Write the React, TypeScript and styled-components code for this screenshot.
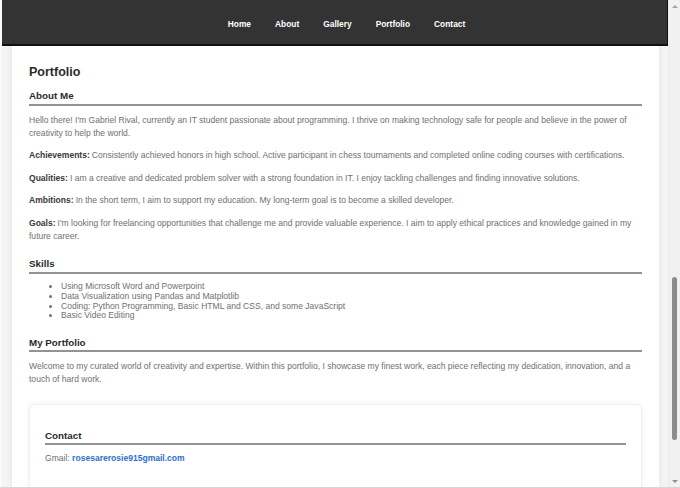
import styled, { createGlobalStyle } from 'styled-components';

interface Skill {
  label: string;
}

interface Detail {
  label: string;
  text: string;
}

const GlobalStyle = createGlobalStyle`
  * {
    box-sizing: border-box;
  }

  html,
  body {
    margin: 0;
    padding: 0;
    background: #ffffff;
    font-family: 'Liberation Sans', Arial, sans-serif;
  }
`;

const Window = styled.div`
  display: flex;
  width: 680px;
  height: 488px;
  overflow: hidden;
  border-bottom: 1px solid #d6d6d6;
`;

const Viewport = styled.div`
  flex: 1;
  display: flex;
  flex-direction: column;
  min-width: 0;
  overflow: hidden;
  background: #f4f4f4;
  border-left: 2px solid #fbfbfb;
`;

const Nav = styled.nav`
  flex: 0 0 46px;
  display: flex;
  align-items: center;
  justify-content: center;
  background: #333333;
  border-right: 1px solid #111111;
  border-bottom: 2px solid #111111;
`;

const NavList = styled.ul`
  display: flex;
  gap: 24px;
  margin: 0;
  padding: 0 0 0 24px;
  list-style: none;
`;

const NavLink = styled.a`
  color: #ffffff;
  font-size: 8.4px;
  font-weight: bold;
  text-decoration: none;
`;

const Page = styled.div`
  flex: 1;
  display: flex;
  justify-content: center;
  padding: 0 9px 0 10px;
  min-height: 0;
`;

const Main = styled.main`
  width: 648px;
  padding: 19px 17px 0;
  background: #ffffff;
  box-shadow: 0 0 6px rgba(0, 0, 0, 0.08);
`;

const PageTitle = styled.h2`
  margin: 0;
  color: #2b2b2b;
  font-size: 12.5px;
  font-weight: bold;
  line-height: 14.4px;
`;

const Section = styled.section<{ $top?: number }>`
  margin-top: ${({ $top }) => $top ?? 15.7}px;
`;

const SectionTitle = styled.h3<{ $tight?: boolean }>`
  margin: 0 0 ${({ $tight }) => ($tight ? 7 : 8)}px;
  padding-bottom: ${({ $tight }) => ($tight ? 1.5 : 2.5)}px;
  border-bottom: 2px solid #939393;
  color: #2b2b2b;
  font-size: 9.8px;
  font-weight: bold;
  line-height: 11.3px;
`;

const Paragraph = styled.p`
  margin: 0 0 9.5px;
  color: #707070;
  font-size: 8.55px;
  line-height: 13px;

  &:last-child {
    margin-bottom: 0;
  }
`;

const Label = styled.strong`
  color: #3a3a3a;
  margin-right: 2px;
`;

const SkillList = styled.ul`
  margin: 0;
  padding-left: 32px;
  color: #707070;
  font-size: 8.55px;
  line-height: 9.7px;
`;

const ContactCard = styled.div`
  margin-top: 17.5px;
  padding: 15px 15px 40px;
  border: 1px solid #f0f0f0;
  border-radius: 5px;
  box-shadow: 0 0 5px rgba(0, 0, 0, 0.06);
  background: #ffffff;
`;

const Mail = styled.a`
  color: #2f6fd0;
  font-weight: bold;
  text-decoration: none;
`;

const Scrollbar = styled.div`
  flex: 0 0 12px;
  display: flex;
  flex-direction: column;
  background: #f1f1f1;
  border-left: 1px solid #e9e9e9;
`;

const Arrow = styled.div<{ $down?: boolean }>`
  flex: 0 0 12px;
  display: flex;
  align-items: center;
  justify-content: center;

  &::before {
    content: '';
    border-left: 3px solid transparent;
    border-right: 3px solid transparent;
    ${({ $down }) =>
      $down ? 'border-top: 3px solid #8f8f8f;' : 'border-bottom: 3px solid #a5a5a5;'}
  }
`;

const Track = styled.div`
  flex: 1;
  display: flex;
  justify-content: center;
`;

const Thumb = styled.div`
  width: 5px;
  height: 163px;
  margin-top: 265px;
  border-radius: 3px;
  background: #8c8c8c;
`;

const links = ['Home', 'About', 'Gallery', 'Portfolio', 'Contact'];

const details: Detail[] = [
  {
    label: 'Achievements:',
    text: 'Consistently achieved honors in high school. Active participant in chess tournaments and completed online coding courses with certifications.',
  },
  {
    label: 'Qualities:',
    text: 'I am a creative and dedicated problem solver with a strong foundation in IT. I enjoy tackling challenges and finding innovative solutions.',
  },
  {
    label: 'Ambitions:',
    text: 'In the short term, I aim to support my education. My long-term goal is to become a skilled developer.',
  },
  {
    label: 'Goals:',
    text: "I'm looking for freelancing opportunities that challenge me and provide valuable experience. I aim to apply ethical practices and knowledge gained in my future career.",
  },
];

const skills: Skill[] = [
  { label: 'Using Microsoft Word and Powerpoint' },
  { label: 'Data Visualization using Pandas and Matplotlib' },
  { label: 'Coding: Python Programming, Basic HTML and CSS, and some JavaScript' },
  { label: 'Basic Video Editing' },
];

const App = () => {
  return (
    <>
      <GlobalStyle />
      <Window>
        <Viewport>
          <Nav>
            <NavList>
              {links.map((link) => (
                <li key={link}>
                  <NavLink href={`#${link.toLowerCase()}`}>{link}</NavLink>
                </li>
              ))}
            </NavList>
          </Nav>
          <Page>
            <Main id="portfolio">
              <PageTitle>Portfolio</PageTitle>

              <Section $top={10.5}>
                <SectionTitle>About Me</SectionTitle>
                <Paragraph>
                  Hello there! I'm Gabriel Rival, currently an IT student passionate about programming. I
                  thrive on making technology safe for people and believe in the power of creativity to
                  help the world.
                </Paragraph>
                {details.map((detail) => (
                  <Paragraph key={detail.label}>
                    <Label>{detail.label}</Label>
                    {detail.text}
                  </Paragraph>
                ))}
              </Section>

              <Section>
                <SectionTitle>Skills</SectionTitle>
                <SkillList>
                  {skills.map((skill) => (
                    <li key={skill.label}>{skill.label}</li>
                  ))}
                </SkillList>
              </Section>

              <Section>
                <SectionTitle>My Portfolio</SectionTitle>
                <Paragraph>
                  Welcome to my curated world of creativity and expertise. Within this portfolio, I
                  showcase my finest work, each piece reflecting my dedication, innovation, and a touch
                  of hard work.
                </Paragraph>
              </Section>

              <ContactCard id="contact">
                <Section $top={10.3}>
                  <SectionTitle $tight>Contact</SectionTitle>
                  <Paragraph>
                    Gmail: <Mail href="mailto:rosesarerosie915gmail.com">rosesarerosie915gmail.com</Mail>
                  </Paragraph>
                </Section>
              </ContactCard>
            </Main>
          </Page>
        </Viewport>
        <Scrollbar>
          <Arrow />
          <Track>
            <Thumb />
          </Track>
          <Arrow $down />
        </Scrollbar>
      </Window>
    </>
  );
};

export default App;
